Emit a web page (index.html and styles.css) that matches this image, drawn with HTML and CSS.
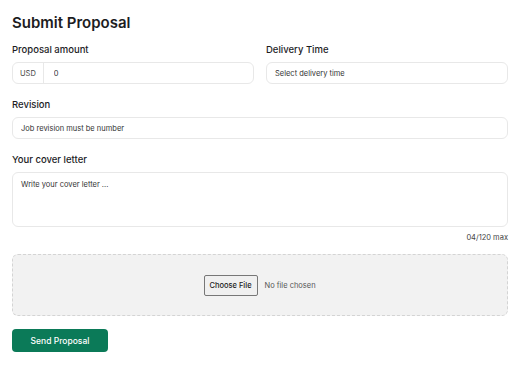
FILE: index.html
```html
<!DOCTYPE html>
<html>
  <head>
    <title>Submit Proposal</title>
    <link rel="stylesheet" href="styles.css">
  </head>
  <body>
    <form class="proposal">
      <h2 class="title">Submit Proposal</h2>
      <div class="row two">
        <div class="field">
          <label>Proposal amount</label>
          <div class="input amount">
            <span class="currency">USD</span>
            <input type="text" value="0">
          </div>
        </div>
        <div class="field">
          <label>Delivery Time</label>
          <div class="input">
            <input type="text" placeholder="Select delivery time">
          </div>
        </div>
      </div>
      <div class="field">
        <label>Revision</label>
        <div class="input">
          <input type="text" placeholder="Job revision must be number">
        </div>
      </div>
      <div class="field cover">
        <label>Your cover letter</label>
        <textarea class="letter" placeholder="Write your cover letter ..."></textarea>
        <span class="count">04/120 max</span>
      </div>
      <div class="upload">
        <button type="button" class="choose">Choose File</button>
        <span class="no-file">No file chosen</span>
      </div>
      <button type="button" class="send">Send Proposal</button>
    </form>
  </body>
</html>
```

FILE: styles.css
```css
* {
  margin: 0;
  padding: 0;
  box-sizing: border-box;
}

body {
  background-color: #fff;
  font-family: "Inter", "Noto Sans", sans-serif;
  color: #1d1d1f;
  padding: 12px 13px 12px 12px;
}

.proposal {
  display: flex;
  flex-direction: column;
}

.title {
  font-size: 15px;
  font-weight: 600;
  line-height: 18px;
  margin-top: 2px;
  margin-bottom: 11px;
}

.row.two {
  display: grid;
  grid-template-columns: 1fr 1fr;
  column-gap: 12px;
}

.field {
  display: flex;
  flex-direction: column;
  margin-bottom: 14px;
}

.field label {
  font-size: 9.5px;
  font-weight: 500;
  line-height: 14px;
  margin-bottom: 5px;
}

.input {
  display: flex;
  align-items: center;
  height: 22px;
  border: 1px solid #e8e8e8;
  border-radius: 6px;
  background-color: #fff;
}

.input input {
  flex: 1;
  border: none;
  outline: none;
  background: transparent;
  font-family: inherit;
  font-size: 7.5px;
  color: #333;
  padding: 0 8px;
}

.input input::placeholder,
.letter::placeholder {
  color: #333;
}

.amount .currency {
  font-size: 7.5px;
  color: #444;
  padding: 0 7px;
  height: 100%;
  display: flex;
  align-items: center;
  border-right: 1px solid #e8e8e8;
}

.amount input {
  padding-left: 10px;
}

.letter {
  height: 55px;
  border: 1px solid #e8e8e8;
  border-radius: 6px;
  resize: none;
  outline: none;
  font-family: inherit;
  font-size: 7.5px;
  padding: 7px 8px;
}

.count {
  align-self: flex-end;
  font-size: 7.5px;
  line-height: 9px;
  color: #444;
  margin-top: 6px;
}

.field.cover {
  margin-bottom: 12px;
}

.upload {
  height: 62px;
  border: 1px dashed #d4d4d4;
  border-radius: 6px;
  background-color: #f2f2f2;
  display: flex;
  justify-content: center;
  align-items: center;
  gap: 7px;
}

.choose {
  font-family: inherit;
  font-size: 7.5px;
  font-weight: 500;
  color: #222;
  width: 54px;
  height: 21px;
  border: 1px solid #777;
  border-radius: 2px;
  background-color: #f0f0f0;
}

.no-file {
  font-size: 7.5px;
  color: #555;
  width: 52px;
}

.send {
  align-self: flex-start;
  margin-top: 13px;
  width: 96px;
  height: 23px;
  border: none;
  border-radius: 4px;
  background-color: #0b7a58;
  color: #fff;
  font-family: inherit;
  font-size: 8.5px;
  font-weight: 500;
}
```
